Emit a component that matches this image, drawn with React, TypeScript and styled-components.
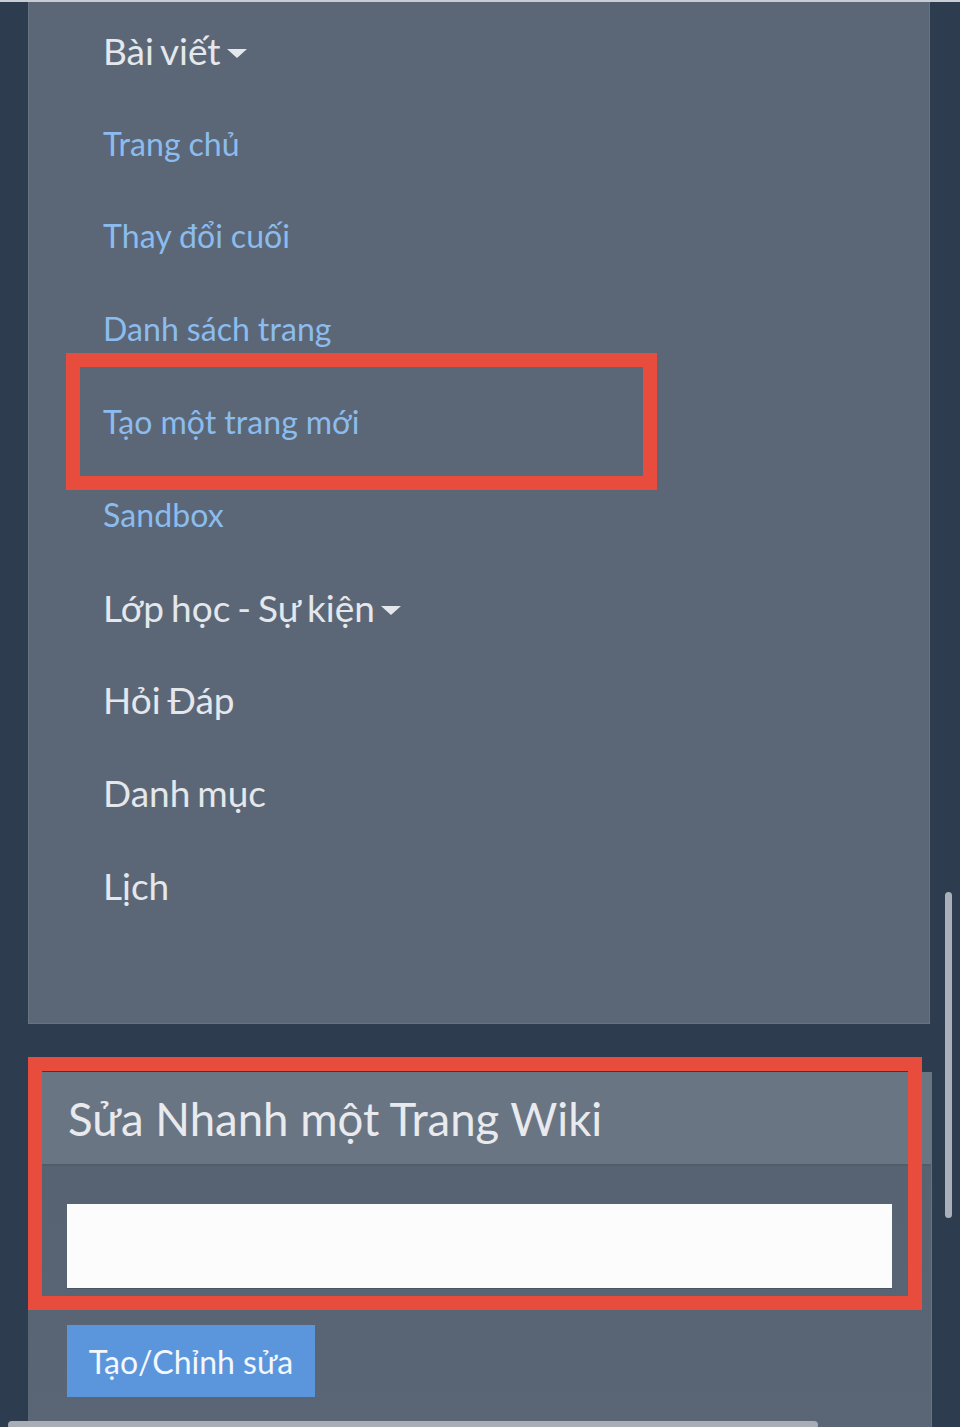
import React from "react";
import styled, { createGlobalStyle } from "styled-components";

const GlobalStyle = createGlobalStyle`
  html, body {
    margin: 0;
    padding: 0;
    background: #2e3c4f;
  }
  body {
    font-family: Lato, "Open Sans", sans-serif;
    overflow: hidden;
  }
`;

const Page = styled.div`
  position: relative;
  width: 960px;
  height: 1427px;
  overflow: hidden;
  box-sizing: border-box;
  border-top: 2px solid #c9ced6;
  padding: 0 30px 0 28px;
  background: #2e3c4f;
`;

const MenuPanel = styled.nav`
  box-sizing: border-box;
  height: 1022px;
  background: #5b6777;
  border: 1px solid #677382;
  border-top: none;
  padding: 2px 0 0 74px;
`;

const MenuItem = styled.div<{ $sub?: boolean }>`
  height: 92.8px;
  display: flex;
  align-items: center;
  font-size: ${(p) => (p.$sub ? "32px" : "37px")};
  color: ${(p) => (p.$sub ? "#8cbcee" : "#e4e7ec")};
  letter-spacing: ${(p) => (p.$sub ? "0.1px" : "0")};
  word-spacing: ${(p) => (p.$sub ? "-0.5px" : "-2.5px")};
`;

const Caret = styled.span`
  display: inline-block;
  width: 0;
  height: 0;
  margin-left: 6px;
  margin-top: 6px;
  border-left: 10px solid transparent;
  border-right: 10px solid transparent;
  border-top: 9px solid #e4e7ec;
`;

const EditPanel = styled.section`
  margin-top: 48px;
  margin-right: -2px;
  background: linear-gradient(180deg, #566171 0%, #5a6676 100%);
  border-right: 1px solid #677382;
  height: 360px;
`;

const EditHeader = styled.h2`
  margin: 0;
  box-sizing: border-box;
  height: 94px;
  display: flex;
  align-items: center;
  padding-left: 40px;
  background: #6a7584;
  border-bottom: 2px solid #525d6c;
  font-weight: 400;
  font-size: 45.5px;
  color: #e8eaee;
`;

const EditBody = styled.div`
  padding: 38px 39px 0 39px;
  display: flex;
  flex-direction: column;
  align-items: flex-start;
  gap: 36px;
`;

const TitleInput = styled.input`
  box-sizing: border-box;
  width: 100%;
  height: 85px;
  border: none;
  border-bottom: 1px solid #4a5563;
  background: #fcfcfd;
  outline: none;
  font-size: 28px;
  font-family: Lato, sans-serif;
  padding: 0 16px;
`;

const SubmitButton = styled.button`
  width: 248px;
  height: 72px;
  border: none;
  background: #5b96dc;
  color: #f4f7fb;
  font-family: Lato, sans-serif;
  font-size: 32px;
  padding: 0;
`;

const Highlight = styled.div<{ $x: number; $y: number; $w: number; $h: number }>`
  position: absolute;
  left: ${(p) => p.$x}px;
  top: ${(p) => p.$y}px;
  width: ${(p) => p.$w}px;
  height: ${(p) => p.$h}px;
  box-sizing: border-box;
  border: 14px solid #e84c3d;
  pointer-events: none;
`;

const VScroll = styled.div`
  position: absolute;
  left: 945px;
  top: 890px;
  width: 7px;
  height: 326px;
  border-radius: 4px;
  background: #a9b0ba;
`;

const HScroll = styled.div`
  position: absolute;
  left: 8px;
  top: 1419px;
  width: 810px;
  height: 8px;
  border-radius: 4px;
  background: #a9aeb6;
`;

const items: { label: string; sub?: boolean; caret?: boolean }[] = [
  { label: "Bài viết", caret: true },
  { label: "Trang chủ", sub: true },
  { label: "Thay đổi cuối", sub: true },
  { label: "Danh sách trang", sub: true },
  { label: "Tạo một trang mới", sub: true },
  { label: "Sandbox", sub: true },
  { label: "Lớp học - Sự kiện", caret: true },
  { label: "Hỏi Đáp" },
  { label: "Danh mục" },
  { label: "Lịch" },
];

export default function App() {
  return (
    <Page>
      <GlobalStyle />
      <MenuPanel>
        {items.map((it) => (
          <MenuItem key={it.label} $sub={it.sub}>
            {it.label}
            {it.caret && <Caret />}
          </MenuItem>
        ))}
      </MenuPanel>
      <EditPanel>
        <EditHeader>Sửa Nhanh một Trang Wiki</EditHeader>
        <EditBody>
          <TitleInput type="text" />
          <SubmitButton>Tạo/Chỉnh sửa</SubmitButton>
        </EditBody>
      </EditPanel>
      <Highlight $x={66} $y={351} $w={591} $h={137} />
      <Highlight $x={28} $y={1055} $w={894} $h={253} />
      <VScroll />
      <HScroll />
    </Page>
  );
}
